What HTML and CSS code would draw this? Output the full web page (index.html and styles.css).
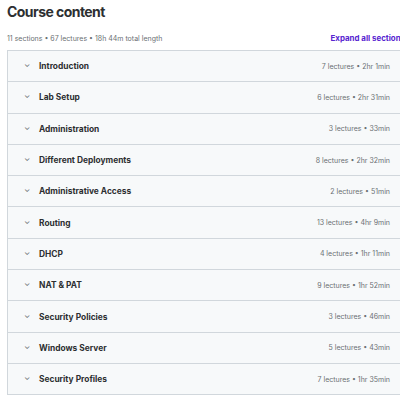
FILE: index.html
```html
<!DOCTYPE html>
<html lang="en">
<head>
    <meta charset="UTF-8">
    <meta name="viewport" content="width=device-width, initial-scale=1.0">
    <title>Course content</title>
    <link rel="stylesheet" href="styles.css">
</head>
<body>
    <div class="page">
        <h2 class="title">Course content</h2>

        <div class="summary">
            <span class="stats">11 sections • 67 lectures • 18h 44m total length</span>
            <button class="expand">Expand all sections</button>
        </div>

        <div class="sections">
            <div class="section"><span class="chev">&#8964;</span><span class="name">Introduction</span><span class="meta">7 lectures • 2hr 1min</span></div>
            <div class="section"><span class="chev">&#8964;</span><span class="name">Lab Setup</span><span class="meta">6 lectures • 2hr 31min</span></div>
            <div class="section"><span class="chev">&#8964;</span><span class="name">Administration</span><span class="meta">3 lectures • 33min</span></div>
            <div class="section"><span class="chev">&#8964;</span><span class="name">Different Deployments</span><span class="meta">8 lectures • 2hr 32min</span></div>
            <div class="section"><span class="chev">&#8964;</span><span class="name">Administrative Access</span><span class="meta">2 lectures • 51min</span></div>
            <div class="section"><span class="chev">&#8964;</span><span class="name">Routing</span><span class="meta">13 lectures • 4hr 9min</span></div>
            <div class="section"><span class="chev">&#8964;</span><span class="name">DHCP</span><span class="meta">4 lectures • 1hr 11min</span></div>
            <div class="section"><span class="chev">&#8964;</span><span class="name">NAT &amp; PAT</span><span class="meta">9 lectures • 1hr 52min</span></div>
            <div class="section"><span class="chev">&#8964;</span><span class="name">Security Policies</span><span class="meta">3 lectures • 46min</span></div>
            <div class="section"><span class="chev">&#8964;</span><span class="name">Windows Server</span><span class="meta">5 lectures • 43min</span></div>
            <div class="section"><span class="chev">&#8964;</span><span class="name">Security Profiles</span><span class="meta">7 lectures • 1hr 35min</span></div>
        </div>
    </div>
</body>
</html>
```

FILE: styles.css
```css
body {
    margin: 0;
    background-color: #ffffff;
    color: #2d2f31;
    font-family: 'Inter', 'Noto Sans', sans-serif;
    overflow: hidden;
}

.page {
    width: 402px;
    padding: 2px 0 0 7px;
}

.title {
    margin: 0;
    font-size: 14px;
    font-weight: 700;
    letter-spacing: -0.55px;
    line-height: 20px;
}

.summary {
    display: flex;
    justify-content: space-between;
    align-items: center;
    margin-top: 7px;
    height: 18px;
    padding-right: 4px;
    margin-bottom: 3px;
}

.stats {
    font-size: 7px;
    color: #6a6f73;
}

.expand {
    border: none;
    background: none;
    padding: 0;
    font-family: inherit;
    font-size: 7.9px;
    font-weight: 700;
    color: #5624d0;
    white-space: nowrap;
    cursor: pointer;
}

.sections {
    border: 1px solid #d1d7dc;
    border-bottom: none;
}

.section {
    display: flex;
    align-items: center;
    height: 30.3px;
    background-color: #f7f9fa;
    border-bottom: 1px solid #d1d7dc;
    padding: 0 18px 0 16px;
}

.chev {
    width: 15px;
    font-size: 8px;
    color: #6a6f73;
    line-height: 1;
    transform: translateY(-2px);
}

.name {
    flex: 1;
    font-size: 8.4px;
    font-weight: 700;
    color: #2d2f31;
}

.meta {
    font-size: 7px;
    color: #6a6f73;
}
```
